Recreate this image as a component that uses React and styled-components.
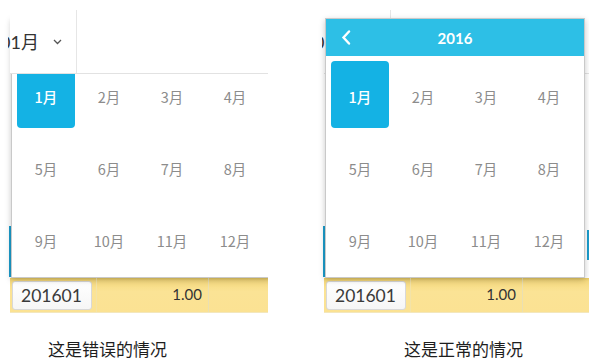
import React from "react";
import styled, { createGlobalStyle } from "styled-components";

const Global = createGlobalStyle`
  html, body { margin: 0; padding: 0; background: #fff; }
  body { font-family: "Noto Sans CJK SC", "Noto Sans", sans-serif; }
`;

const Page = styled.div`
  display: flex;
  gap: 46px;
  width: 589px;
  height: 363px;
  overflow: hidden;
`;

const Column = styled.div`
  display: flex;
  flex-direction: column;
  width: ${(p) => p.$width}px;
`;

const Scene = styled.div`
  position: relative;
  width: ${(p) => p.$width}px;
  height: 313px;
  overflow: hidden;
  display: flex;
  flex-direction: column;
`;

const TopBar = styled.div`
  position: relative;
  z-index: ${(p) => (p.$front ? 2 : 0)};
  background: #fff;
  height: 73px;
  margin-left: 10px;
  display: flex;
  align-items: flex-end;
  border-bottom: 1px solid #e2e2e2;
  flex-shrink: 0;
`;

const SelectBox = styled.div`
  margin-left: -2px;
  width: 69px;
  height: 63px;
  border-right: 1px solid #e6e6e6;
  overflow: hidden;
  display: flex;
  align-items: center;
  justify-content: flex-end;
  gap: 14px;
  padding-right: 14px;
  box-sizing: border-box;
  white-space: nowrap;
  font-size: 18px;
  color: #333;
`;

const SelectText = styled.span`
  flex-shrink: 0;
  font-family: "Lato", "Noto Sans CJK SC", sans-serif;
  margin-top: -2px;
`;

const ChevronBox = styled.span`
  flex-shrink: 0;
  display: flex;
  margin-top: 1px;
`;

const Stage = styled.div`
  height: 204px;
  display: flex;
  align-items: flex-end;
  justify-content: space-between;
  padding: 0 0 1px 9px;
  box-sizing: border-box;
  flex-shrink: 0;
`;

const Accent = styled.div`
  width: 2px;
  height: ${(p) => p.$h}px;
  margin-bottom: ${(p) => p.$mb || 0}px;
  background: #1b9ccc;
`;

const Row = styled.div`
  height: 35px;
  margin-left: 10px;
  display: flex;
  background: linear-gradient(to bottom, #e9cb63 0, #f6da80 3px, #fbe395 40%, #fbe293 100%);
  border-bottom: 1px solid #f3e7bd;
  box-sizing: border-box;
  flex-shrink: 0;
`;

const InputCell = styled.div`
  width: 87px;
  padding: 3px 4px 0 2px;
  box-sizing: border-box;
  border-right: 1px solid #f3e3a8;
`;

const InputBox = styled.div`
  height: 29px;
  box-sizing: border-box;
  border: 1px solid #d8d8d8;
  border-radius: 3px;
  background: linear-gradient(to bottom, #fff, #f6f6f6);
  font-family: "Lato", sans-serif;
  font-size: 17.5px;
  color: #3a3a3a;
  line-height: 27px;
  padding-left: 8px;
`;

const AmountCell = styled.div`
  width: 112px;
  box-sizing: border-box;
  padding-right: 6px;
  border-right: 1px solid #eadfb2;
  text-align: right;
  font-family: "Lato", sans-serif;
  font-size: 15px;
  color: #333;
  line-height: 33px;
`;

const Popup = styled.div`
  position: absolute;
  z-index: 1;
  left: 11px;
  top: 18px;
  width: 260px;
  box-sizing: border-box;
  background: #fff;
  border: 1px solid #c9c9c9;
  box-shadow: 0 2px 6px rgba(0, 0, 0, 0.22);
`;

const PopupHeader = styled.div`
  height: 37px;
  background: #2dbfe6;
  display: flex;
  align-items: center;
  justify-content: center;
  position: relative;
  color: #fff;
  font-family: "Lato", sans-serif;
  font-weight: 700;
  font-size: 15px;
`;

const BackButton = styled.span`
  position: absolute;
  left: 15px;
  top: 11px;
  display: flex;
`;

const MonthGrid = styled.div`
  display: grid;
  grid-template-columns: repeat(4, 58px);
  grid-auto-rows: 67px;
  gap: 5px;
  padding: 5px 5px 5px 5px;
`;

const Month = styled.div`
  display: flex;
  align-items: center;
  justify-content: center;
  padding-top: 4px;
  box-sizing: border-box;
  border-radius: 4px;
  font-size: 14.5px;
  background: ${(p) => (p.$active ? "#14b2e4" : "transparent")};
  color: ${(p) => (p.$active ? "#fff" : "#8c8c8c")};
  font-weight: ${(p) => (p.$active ? 500 : 400)};
`;

const Caption = styled.div`
  margin-top: 24px;
  padding-left: ${(p) => p.$indent}px;
  font-size: 17px;
  line-height: 24px;
  color: #1e1e1e;
  white-space: nowrap;
`;

const months = ["1月", "2月", "3月", "4月", "5月", "6月", "7月", "8月", "9月", "10月", "11月", "12月"];

function Chevron() {
  return (
    <svg width="9" height="6" viewBox="0 0 9 6">
      <path d="M1 1 L4.5 4.5 L8 1" fill="none" stroke="#555" strokeWidth="1.3" />
    </svg>
  );
}

function BackIcon() {
  return (
    <svg width="10" height="15" viewBox="0 0 10 15">
      <path d="M8 1.5 L2.5 7.5 L8 13.5" fill="none" stroke="#fff" strokeWidth="2.4" strokeLinecap="round" />
    </svg>
  );
}

function Demo({ width, headerFront, caption, indent, rightAccent }) {
  return (
    <Column $width={width}>
      <Scene $width={width}>
        <TopBar $front={headerFront}>
          <SelectBox>
            <SelectText>2016年01月</SelectText>
            <ChevronBox>
              <Chevron />
            </ChevronBox>
          </SelectBox>
        </TopBar>
        <Stage>
          <Accent $h={51} />
          {rightAccent && <Accent $h={30} $mb={17} />}
        </Stage>
        <Row>
          <InputCell>
            <InputBox>201601</InputBox>
          </InputCell>
          <AmountCell>1.00</AmountCell>
        </Row>
        <Popup>
          <PopupHeader>
            <BackButton>
              <BackIcon />
            </BackButton>
            2016
          </PopupHeader>
          <MonthGrid>
            {months.map((m, i) => (
              <Month key={m} $active={i === 0}>
                {m}
              </Month>
            ))}
          </MonthGrid>
        </Popup>
      </Scene>
      <Caption $indent={indent}>{caption}</Caption>
    </Column>
  );
}

export default function App() {
  return (
    <>
      <Global />
      <Page>
        <Demo width={268} headerFront caption="这是错误的情况" indent={48} />
        <Demo width={275} caption="这是正常的情况" indent={90} rightAccent />
      </Page>
    </>
  );
}
